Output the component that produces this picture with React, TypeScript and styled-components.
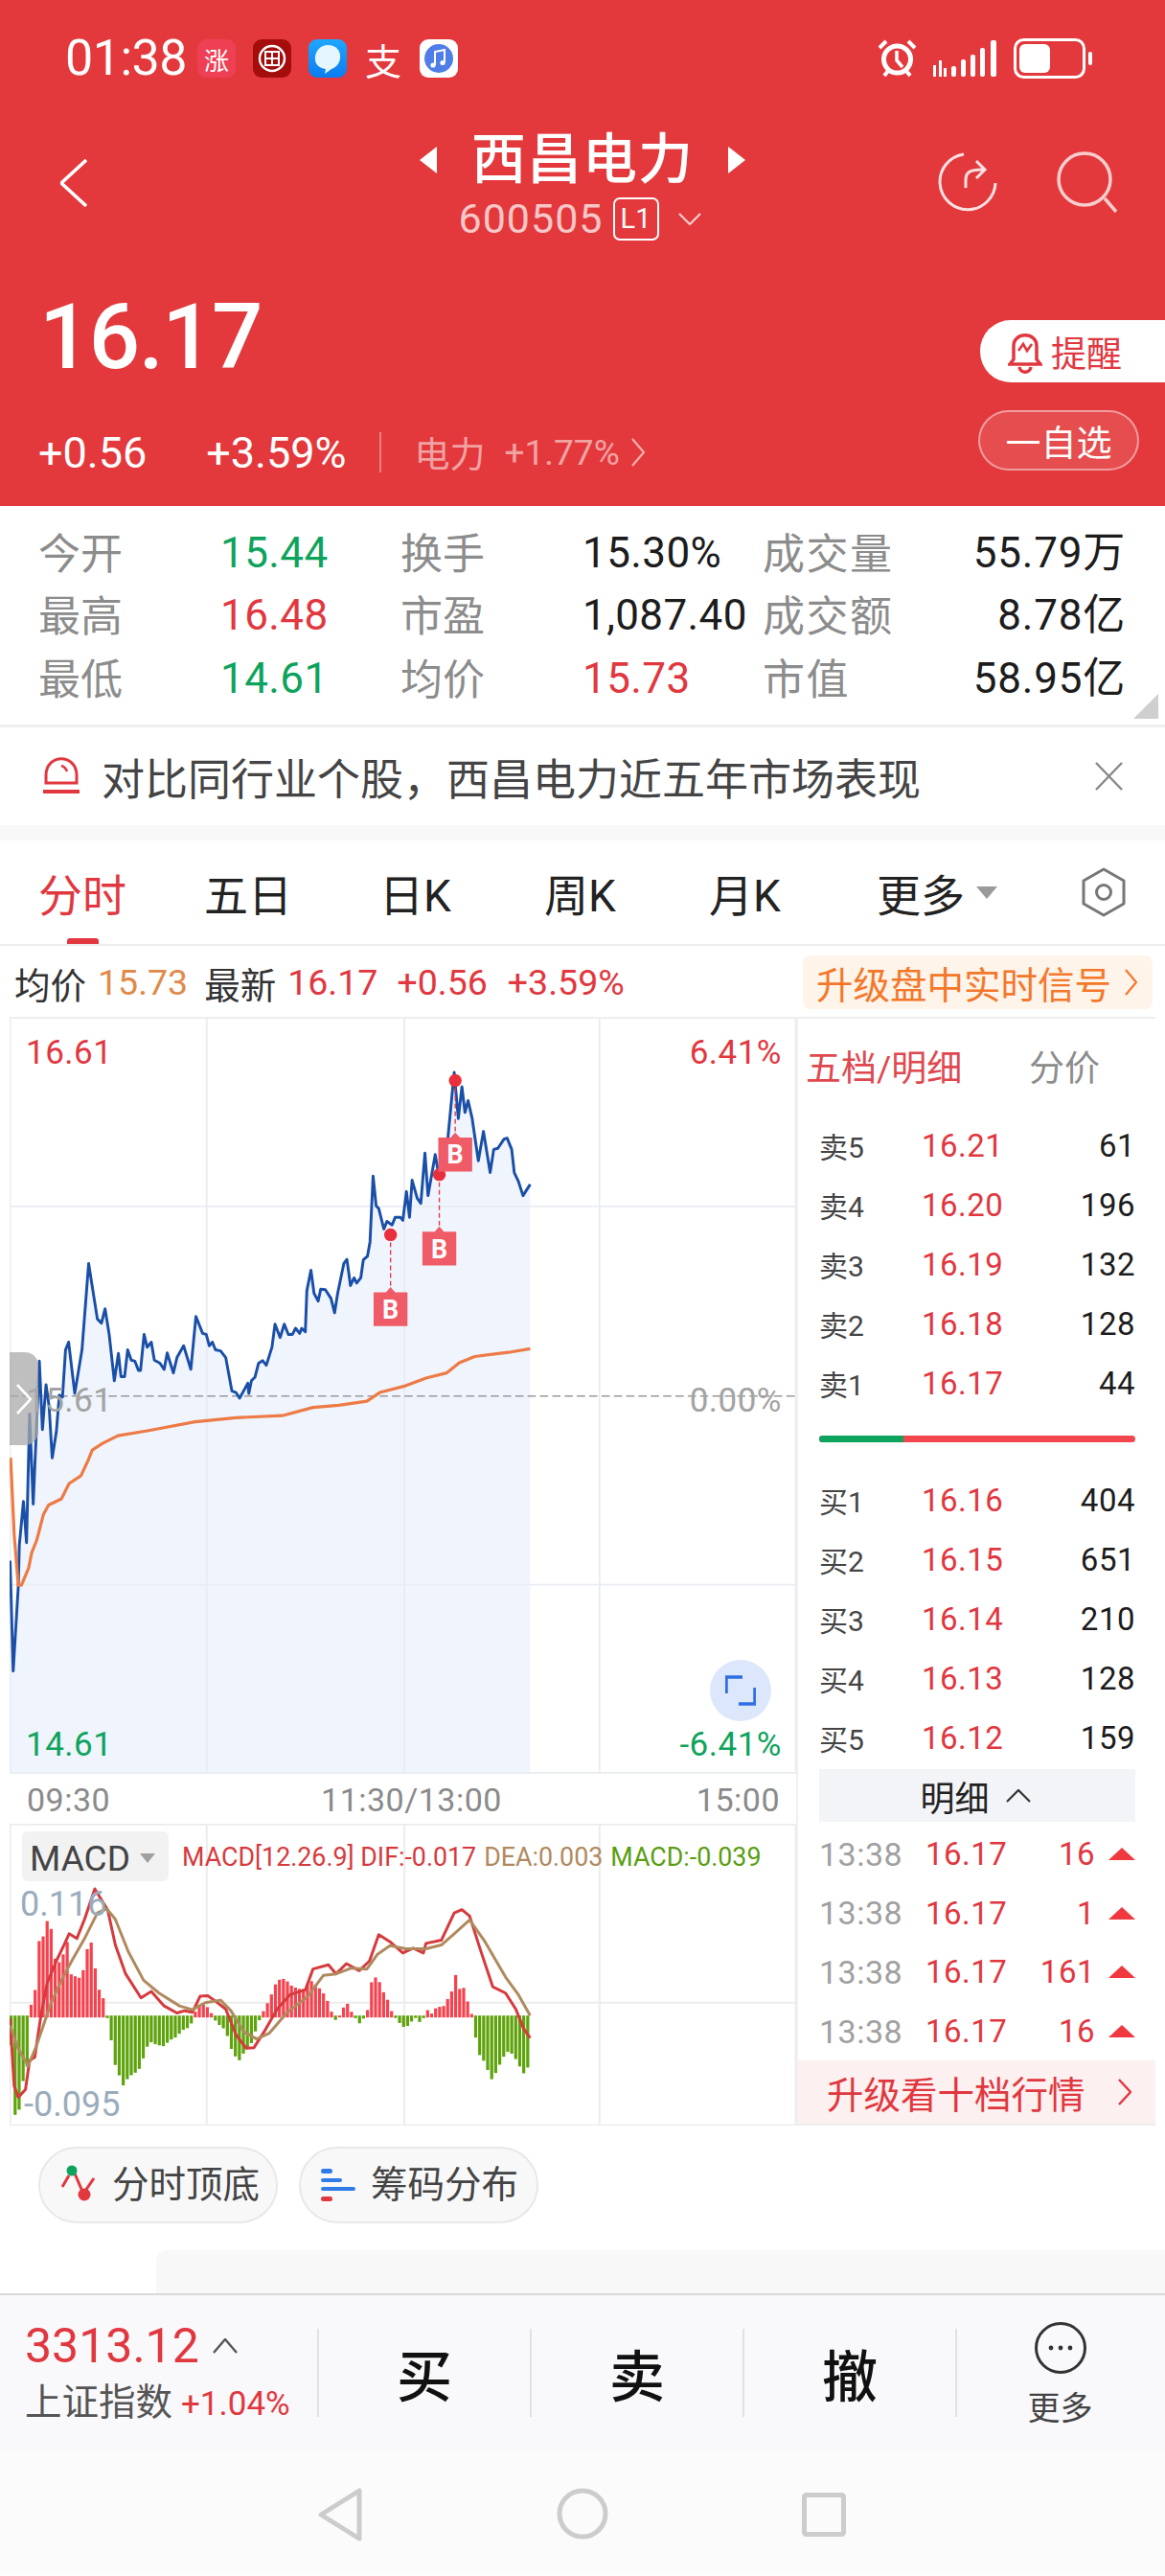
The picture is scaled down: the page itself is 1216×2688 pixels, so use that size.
import React from 'react';
import styled, { createGlobalStyle } from 'styled-components';

const RED = '#e3393c';
const UP = '#e1373f';
const DOWN = '#0ea35c';

const GlobalStyle = createGlobalStyle`
  html, body { margin: 0; padding: 0; background: #fff; }
  * { box-sizing: border-box; }
`;

const toneColor = (tone?: string) =>
  tone === 'up' ? UP : tone === 'down' ? DOWN : tone === 'muted' ? '#8c8c8c' : tone === 'flat' ? '#a3a3a3' : '#1c1c1c';

const Page = styled.div`
  width: 1216px;
  height: 2688px;
  overflow: hidden;
  background: #fff;
  font-family: Roboto, "Noto Sans CJK SC", sans-serif;
  color: #1c1c1c;
`;

/* ---------- header ---------- */
const Header = styled.header`
  height: 528px;
  background: ${RED};
  color: #fff;
  display: flex;
  flex-direction: column;
`;
const StatusBar = styled.div`
  display: flex;
  align-items: center;
  height: 40px;
  margin-top: 41px;
  padding: 0 74px 0 68px;
`;
const Clock = styled.span`
  font-size: 52px;
  line-height: 40px;
  width: 138px;
  letter-spacing: -0.5px;
`;
const AppIcons = styled.div`
  display: flex;
  gap: 18px;
  flex: 1;
`;
const AppIcon = styled.div<{ $bg: string; $size: number }>`
  width: 40px;
  height: 40px;
  border-radius: 9px;
  background: ${p => p.$bg};
  color: #fff;
  font-size: ${p => p.$size}px;
  display: flex;
  align-items: center;
  justify-content: center;
`;
const StatusRight = styled.div`
  display: flex;
  align-items: center;
  gap: 16px;
`;
const NavRow = styled.div`
  display: grid;
  grid-template-columns: 1fr auto 1fr;
  height: 128px;
  margin-top: 51px;
`;
const BackCell = styled.div`
  padding: 34px 0 0 63px;
`;
const TitleCell = styled.div`
  display: flex;
  flex-direction: column;
  align-items: center;
`;
const TitleLine = styled.div`
  display: flex;
  align-items: center;
  gap: 34px;
  height: 70px;
`;
const Title = styled.h1`
  margin: 0;
  font-size: 57px;
  line-height: 70px;
  font-weight: 500;
  letter-spacing: 1px;
`;
const CodeLine = styled.div`
  display: flex;
  align-items: center;
  height: 52px;
  margin-top: 0;
  padding-right: 6px;
  color: rgba(255, 255, 255, 0.72);
  font-size: 43px;
  letter-spacing: 1px;
`;
const LevelTag = styled.span`
  width: 48px;
  height: 45px;
  margin: 0 20px 0 10px;
  border: 2px solid #fff;
  border-radius: 7px;
  color: #fff;
  font-size: 29px;
  letter-spacing: 0;
  display: flex;
  align-items: center;
  justify-content: center;
`;
const ActionCell = styled.div`
  display: flex;
  justify-content: flex-end;
  gap: 61px;
  padding: 26px 49px 0 0;
`;
const PriceRow = styled.div`
  display: flex;
  justify-content: space-between;
  margin-top: 52px;
`;
const PriceBlock = styled.div`
  padding-left: 41px;
`;
const LastPrice = styled.div`
  font-size: 94px;
  line-height: 80px;
  font-weight: 500;
  height: 132px;
  letter-spacing: -1.6px;
`;
const ChangeLine = styled.div`
  display: flex;
  align-items: center;
  height: 56px;
  font-size: 45px;
  margin-left: -1px;
`;
const ChangeText = styled.span`
  margin-right: 62px;
  &:nth-child(2) { margin-right: 34px; }
`;
const Separator = styled.span`
  width: 2px;
  height: 42px;
  background: rgba(255, 255, 255, 0.35);
  margin-right: 35px;
`;
const SectorName = styled.span`
  font-size: 37px;
  color: rgba(255, 255, 255, 0.55);
  margin-right: 20px;
`;
const SectorChange = styled.span`
  font-size: 37px;
  color: rgba(255, 255, 255, 0.55);
  margin-right: 12px;
`;
const SideButtons = styled.div`
  display: flex;
  flex-direction: column;
  align-items: flex-end;
  gap: 29px;
  padding-top: 22px;
`;
const RemindButton = styled.div`
  width: 193px;
  height: 65px;
  background: #fff;
  color: ${UP};
  border-radius: 32px 0 0 32px;
  font-size: 37px;
  display: flex;
  align-items: center;
  gap: 9px;
  padding-left: 29px;
`;
const WatchButton = styled.div`
  width: 168px;
  height: 63px;
  margin-right: 27px;
  border: 2px solid rgba(255, 255, 255, 0.45);
  background: rgba(255, 255, 255, 0.1);
  border-radius: 32px;
  font-size: 37px;
  display: flex;
  align-items: center;
  justify-content: center;
`;

/* ---------- stats ---------- */
const StatsGrid = styled.div`
  position: relative;
  height: 231px;
  padding: 16px 41px 0 40px;
  display: grid;
  grid-template-columns: 190px 188px 190px 188px 160px 1fr;
  grid-auto-rows: 65.5px;
  align-items: center;
  border-bottom: 3px solid #f0f0f0;
`;
const StatLabel = styled.div<{ $wide?: boolean }>`
  font-size: 44px;
  line-height: 60px;
  margin-top: 4px;
  color: #8c8c8c;
  white-space: nowrap;
  letter-spacing: ${p => (p.$wide ? 1.5 : 0)}px;
`;
const StatValue = styled.div<{ $tone?: string; $end?: boolean }>`
  font-size: 44px;
  line-height: 60px;
  color: ${p => toneColor(p.$tone)};
  text-align: ${p => (p.$end ? 'right' : 'left')};
  letter-spacing: ${p => (p.$end ? 0.8 : 0.4)}px;
  white-space: nowrap;
`;
const CornerMark = styled.div`
  position: absolute;
  right: 7px;
  bottom: 6px;
  width: 26px;
  height: 26px;
  background: #cfcfcf;
  clip-path: polygon(100% 0, 100% 100%, 0 100%);
`;

/* ---------- banner + tabs ---------- */
const Banner = styled.div`
  height: 102px;
  display: flex;
  align-items: center;
  padding: 0 44px;
  font-size: 45px;
  color: #444;
`;
const BannerText = styled.span`
  flex: 1;
  margin-left: 22px;
  white-space: nowrap;
`;
const GapBand = styled.div`
  height: 16px;
  background: #f8f8f8;
`;
const Tabs = styled.nav`
  height: 110px;
  display: grid;
  grid-template-columns: 173px 183px 172px 172px 175px 213px 1fr;
  align-items: center;
  padding-left: 40px;
  border-bottom: 2px solid #ececec;
`;
const Tab = styled.div<{ $active?: boolean }>`
  position: relative;
  height: 108px;
  display: flex;
  align-items: center;
  font-size: 46px;
  color: ${p => (p.$active ? UP : '#222')};
  &::after {
    content: '';
    display: ${p => (p.$active ? 'block' : 'none')};
    position: absolute;
    left: 30px;
    bottom: 0;
    width: 33px;
    height: 6px;
    border-radius: 3px 3px 0 0;
    background: ${UP};
  }
`;
const TabCaret = styled.span`
  width: 0;
  height: 0;
  margin-left: 12px;
  border-left: 11px solid transparent;
  border-right: 11px solid transparent;
  border-top: 13px solid #9a9a9a;
`;

const InfoRow = styled.div`
  height: 74px;
  display: flex;
  align-items: center;
  padding: 2px 13px 0 15px;
  font-size: 37.5px;
  white-space: nowrap;
`;
const InfoItem = styled.span<{ $color?: string; $gap?: number }>`
  color: ${p => p.$color || '#333'};
  margin-right: ${p => p.$gap ?? 20}px;
`;
const InfoPromo = styled.div`
  margin-left: auto;
  width: 365px;
  height: 56px;
  background: #fff4ea;
  border-radius: 8px;
  color: #f4772a;
  font-size: 38.5px;
  display: flex;
  align-items: center;
  padding-left: 14px;
  gap: 14px;
`;

/* ---------- charts ---------- */
const Trading = styled.div`
  display: flex;
  padding-left: 10px;
`;
const ChartColumn = styled.div`
  width: 821px;
`;
const MainChart = styled.div`
  position: relative;
  height: 790px;
`;
const ChartSvg = styled.svg`
  display: block;
  width: 100%;
  height: 100%;
`;
const ChartLabel = styled.span<{ $tone: string; $y: number; $x: number; $side: 'left' | 'right' }>`
  position: absolute;
  top: ${p => p.$y}px;
  ${p => p.$side}: ${p => p.$x}px;
  font-size: 35px;
  line-height: 36px;
  letter-spacing: 0.5px;
  color: ${p => toneColor(p.$tone)};
`;
const SideTab = styled.div`
  position: absolute;
  left: 0;
  top: 350px;
  width: 30px;
  height: 97px;
  background: rgba(170, 170, 170, 0.75);
  border-radius: 0 14px 14px 0;
  display: flex;
  align-items: center;
  justify-content: center;
`;
const ExpandButton = styled.div`
  position: absolute;
  right: 26px;
  bottom: 55px;
  width: 64px;
  height: 64px;
  border-radius: 50%;
  background: #dce7fb;
  display: flex;
  align-items: center;
  justify-content: center;
`;
const TimeAxis = styled.div`
  height: 52px;
  display: flex;
  justify-content: space-between;
  align-items: center;
  padding: 2px 17px 0 18px;
  font-size: 34px;
  letter-spacing: 0.5px;
  color: #8a8a8a;
`;
const MidTime = styled.span`
  margin-left: 17px;
`;
const MacdPanel = styled.div`
  position: relative;
  height: 315px;
`;
const MacdHead = styled.div`
  position: absolute;
  left: 13px;
  top: 8px;
  display: flex;
  align-items: center;
`;
const MacdSelect = styled.div`
  width: 153px;
  height: 52px;
  border-radius: 6px;
  background: #f2f2f2;
  color: #444;
  font-size: 37px;
  display: flex;
  align-items: center;
  padding: 4px 0 0 8px;
  gap: 10px;
  margin-right: 14px;
`;
const SelectCaret = styled.span`
  width: 0;
  height: 0;
  border-left: 8px solid transparent;
  border-right: 8px solid transparent;
  border-top: 10px solid #a0a0a0;
`;
const MacdLegend = styled.span<{ $color: string }>`
  color: ${p => p.$color};
  font-size: 26.8px;
  margin-right: 8px;
  white-space: nowrap;
  padding-top: 1px;
`;
const AxisNote = styled.span<{ $y: number; $x: number }>`
  position: absolute;
  left: ${p => p.$x}px;
  top: ${p => p.$y}px;
  font-size: 36px;
  line-height: 36px;
  color: #9aacbb;
`;

/* ---------- order book ---------- */
const BookPanel = styled.aside`
  width: 375px;
  border-top: 2px solid #eee;
  border-left: 2px solid #f0f0f0;
  border-bottom: 2px solid #eee;
  height: 1157px;
`;
const BookHead = styled.div`
  height: 101px;
  display: flex;
  align-items: center;
  padding: 0 0 3px 8px;
  font-size: 37px;
  color: #8c8c8c;
`;
const BookTitle = styled.span`
  color: #e0484f;
  width: 233px;
`;
const BookRow = styled.div`
  height: 62px;
  display: grid;
  grid-template-columns: 107px 1fr auto;
  align-items: center;
  padding: 0 21px 0 22px;
  font-size: 33px;
`;
const BookLabel = styled.span`
  color: #444;
  font-size: 30px;
`;
const BookPrice = styled.span`
  color: ${UP};
  letter-spacing: 0.5px;
`;
const BookQty = styled.span`
  color: #1c1c1c;
  letter-spacing: 0.5px;
`;
const RatioBar = styled.div`
  display: flex;
  height: 7px;
  margin: 24px 21px 29px 22px;
  border-radius: 4px;
  overflow: hidden;
  background: #f2474f;
`;
const RatioFill = styled.div`
  background: #0ea35c;
`;
const DetailBar = styled.div`
  height: 55px;
  margin: 2px 21px 3px 22px;
  background: #f3f4f8;
  font-size: 36px;
  color: #222;
  display: flex;
  align-items: center;
  justify-content: center;
  gap: 17px;
  padding-right: 4px;
`;
const DealRow = styled.div`
  height: 61.6px;
  display: grid;
  grid-template-columns: 111px 100px 1fr 42px;
  align-items: center;
  padding: 0 21px 0 22px;
  font-size: 33px;
`;
const DealTime = styled.span`
  color: #a0a0a0;
  font-size: 34px;
  letter-spacing: 0.5px;
`;
const DealPrice = styled.span`
  color: ${UP};
  letter-spacing: 0.5px;
`;
const DealQty = styled.span`
  color: ${UP};
  text-align: right;
  letter-spacing: 0.5px;
`;
const DealArrow = styled.span`
  justify-self: end;
  width: 0;
  height: 0;
  border-left: 14px solid transparent;
  border-right: 14px solid transparent;
  border-bottom: 13px solid #f0383f;
`;
const BookPromo = styled.div`
  height: 66px;
  background: #fdf0f0;
  color: ${UP};
  font-size: 38.5px;
  display: flex;
  align-items: center;
  justify-content: space-between;
  padding: 0 25px 0 30px;
`;

/* ---------- bottom ---------- */
const PillRow = styled.div`
  display: flex;
  gap: 22px;
  padding: 22px 0 28px 40px;
`;
const Pill = styled.div`
  width: 250px;
  height: 80px;
  border-radius: 40px;
  border: 2px solid #e8e8e8;
  background: #f8f8f8;
  font-size: 38.5px;
  color: #444;
  display: flex;
  align-items: center;
  padding: 0 0 0 20px;
  gap: 11px;
  line-height: 76px;
`;
const PeekCard = styled.div`
  height: 45px;
  margin-left: 163px;
  background: #f8f8f8;
  border-radius: 12px 0 0 0;
`;
const TradeBar = styled.div`
  height: 163px;
  border-top: 2px solid #d9d9d9;
  background: #f9f9fb;
  display: flex;
  align-items: center;
`;
const IndexBlock = styled.div`
  width: 331px;
  padding-left: 26px;
`;
const IndexValue = styled.div`
  display: flex;
  align-items: center;
  gap: 14px;
  color: ${UP};
  font-size: 50px;
  line-height: 60px;
`;
const IndexName = styled.div`
  display: flex;
  align-items: baseline;
  gap: 9px;
  margin-top: 4px;
  font-size: 38.5px;
  line-height: 50px;
  color: #555;
  white-space: nowrap;
`;
const IndexChange = styled.span`
  font-size: 35px;
  color: ${UP};
`;
const TradeAction = styled.div`
  width: 222px;
  height: 92px;
  border-left: 2px solid #e2e2e2;
  display: flex;
  align-items: center;
  justify-content: center;
  font-size: 58px;
  font-weight: 500;
  color: #111;
`;
const MoreCell = styled.div`
  flex: 1;
  height: 92px;
  border-left: 2px solid #e2e2e2;
  position: relative;
  display: flex;
  flex-direction: column;
  align-items: center;
  padding-right: 2px;
`;
const MoreInner = styled.div`
  display: flex;
  flex-direction: column;
  align-items: center;
  margin-top: -8px;
  gap: 14px;
  font-size: 34px;
  line-height: 42px;
  color: #444;
`;
const SystemNav = styled.div`
  height: 131px;
  background: #fbfbfc;
  display: flex;
  align-items: flex-start;
  padding: 40px 0 0 332px;
  gap: 202.5px;
`;
const HomeCircle = styled.svg`
  display: block;
`;
const RecentSquare = styled.svg`
  display: block;
  margin-top: 5px;
`;

/* ---------- small drawings ---------- */
const Chevron = ({ dir, w, h, color, sw = 3 }: { dir: 'l' | 'r' | 'd' | 'u'; w: number; h: number; color: string; sw?: number }) => {
  const d = {
    l: `M${w - 1} 1 L1 ${h / 2} L${w - 1} ${h - 1}`,
    r: `M1 1 L${w - 1} ${h / 2} L1 ${h - 1}`,
    d: `M1 1 L${w / 2} ${h - 1} L${w - 1} 1`,
    u: `M1 ${h - 1} L${w / 2} 1 L${w - 1} ${h - 1}`,
  }[dir];
  return (
    <svg width={w} height={h} viewBox={`0 0 ${w} ${h}`} fill="none">
      <path d={d} stroke={color} strokeWidth={sw} />
    </svg>
  );
};

const Arrowhead = ({ right }: { right?: boolean }) => (
  <svg width="20" height="28" viewBox="0 0 20 28">
    <path d={right ? 'M2 0 L20 14 L2 28 Z' : 'M18 0 L0 14 L18 28 Z'} fill="#fff" />
  </svg>
);

const MessagesIcon = () => (
  <svg width="40" height="40" viewBox="0 0 40 40">
    <defs>
      <linearGradient id="msgBg" x1="0" y1="0" x2="0" y2="1">
        <stop offset="0" stopColor="#1ea7ff" />
        <stop offset="1" stopColor="#0a7cf0" />
      </linearGradient>
    </defs>
    <rect width="40" height="40" rx="9" fill="url(#msgBg)" />
    <path d="M20 6 C29 6 34 12 33 20 C32 27 27 30 24 31 L17 36 L18 31 C10 30 6 25 7 18 C8 11 13 6 20 6 Z" fill="#e6f6ff" />
  </svg>
);

const BankIcon = () => (
  <svg width="40" height="40" viewBox="0 0 40 40">
    <rect width="40" height="40" rx="9" fill="#a50d0d" />
    <circle cx="20" cy="20" r="13" fill="none" stroke="#fff" strokeWidth="2.4" />
    <path d="M13 13 H27 V27 H13 Z M13 20 H27 M20 13 V27" fill="none" stroke="#fff" strokeWidth="2" />
  </svg>
);

const MusicIcon = () => (
  <svg width="40" height="40" viewBox="0 0 40 40">
    <rect width="40" height="40" rx="9" fill="#fff" />
    <circle cx="20" cy="20" r="15" fill="#4f7ee8" />
    <path d="M16 27 V13 L26 11 V24" fill="none" stroke="#fff" strokeWidth="2" />
    <circle cx="14" cy="27" r="2.6" fill="#fff" />
    <circle cx="24" cy="24.5" r="2.6" fill="#fff" />
  </svg>
);

const AlarmIcon = () => (
  <svg width="43" height="42" viewBox="0 0 43 42" fill="none" stroke="#fff">
    <circle cx="21.5" cy="22" r="14" strokeWidth="5" />
    <path d="M21 13 V23 L27 30" strokeWidth="3.5" />
    <path d="M3 10 L10 3 M40 10 L33 3 M8 39 L12 34 M35 39 L31 34" strokeWidth="4" />
  </svg>
);

const SignalIcon = () => (
  <svg width="68" height="40" viewBox="0 0 68 40" fill="#fff">
    <rect x="0" y="27" width="3" height="12" />
    <rect x="6" y="22" width="3" height="17" />
    <rect x="11" y="30" width="3" height="9" />
    <rect x="19" y="28" width="5" height="11" rx="2" />
    <rect x="29" y="21" width="5" height="18" rx="2" />
    <rect x="39" y="16" width="5" height="23" rx="2" />
    <rect x="49" y="9" width="5" height="30" rx="2" />
    <rect x="60" y="1" width="6" height="38" rx="2" />
  </svg>
);

const BatteryIcon = () => (
  <svg width="84" height="42" viewBox="0 0 84 42" fill="none">
    <rect x="1.5" y="1.5" width="72" height="39" rx="9" stroke="#fff" strokeWidth="3" />
    <rect x="6" y="6" width="32" height="30" rx="6" fill="#fff" />
    <rect x="78" y="14" width="4" height="14" rx="2" fill="#fff" />
  </svg>
);

const ShareIcon = () => (
  <svg width="64" height="64" viewBox="0 0 64 64" fill="none" stroke="#fff" strokeOpacity="0.85" strokeWidth="3">
    <path d="M28 3 A29 29 0 1 0 61 33" />
    <path d="M30 38 V30 C30 21 35 19 48 19" />
    <path d="M41 10 L50 19 L41 28" />
  </svg>
);

const SearchIcon = () => (
  <svg width="64" height="64" viewBox="0 0 64 64" fill="none" stroke="#fff" strokeOpacity="0.75" strokeWidth="3.5">
    <circle cx="29" cy="29" r="27" />
    <path d="M50 49 L62 63" />
  </svg>
);

const BellIcon = ({ color }: { color: string }) => (
  <svg width="36" height="50" viewBox="0 0 36 50" fill="none" stroke={color} strokeWidth="3.5">
    <path d="M6 33 V19 C6 4 30 4 30 19 V33 L34 38 H2 Z" />
    <path d="M12 41 C13 48 23 48 24 41" />
    <path d="M11 24 L16 17 L20 24 L25 17" strokeWidth="2.6" />
  </svg>
);

const SirenIcon = () => (
  <svg width="40" height="42" viewBox="0 0 40 42" fill="none" stroke="#e1373f" strokeWidth="3">
    <path d="M4 28 V20 C4 -3 36 -3 36 20 V28 Z" />
    <path d="M20 10 C23 11 25 13 26 16" strokeWidth="2.4" />
    <path d="M1 37 H39" strokeWidth="4" />
  </svg>
);

const CloseIcon = () => (
  <svg width="29" height="30" viewBox="0 0 29 30" fill="none" stroke="#888" strokeWidth="2.4">
    <path d="M1 1 L28 29 M28 1 L1 29" />
  </svg>
);

const HexIcon = () => (
  <svg width="48" height="52" viewBox="0 0 48 52" fill="none" stroke="#777" strokeWidth="3">
    <path d="M24 2 L45 14 V38 L24 50 L3 38 V14 Z" strokeLinejoin="round" />
    <circle cx="24" cy="26" r="7.5" />
  </svg>
);

const ExpandIcon = () => (
  <svg width="32" height="32" viewBox="0 0 32 32" fill="none" stroke="#2f6fe4" strokeWidth="3.5">
    <path d="M1 19 V2 H18" />
    <path d="M31 13 V30 H14" />
  </svg>
);

const TopBottomIcon = () => (
  <svg width="44" height="42" viewBox="0 0 44 42" fill="none">
    <path d="M3 23 L10 11" stroke="#e1373f" strokeWidth="3" />
    <path d="M16 9 L25 30 L36 14" stroke="#e1373f" strokeWidth="3" />
    <circle cx="13" cy="6" r="5.5" fill="#0ea35c" />
    <circle cx="26" cy="31" r="6.5" fill="#e1373f" />
  </svg>
);

const ChipsIcon = () => (
  <svg width="42" height="36" viewBox="0 0 42 36">
    <rect x="1" y="1" width="12" height="5" rx="2.5" fill="#2f7be8" />
    <rect x="1" y="11" width="22" height="4" rx="2" fill="#2f7be8" />
    <rect x="1" y="20" width="36" height="4" rx="2" fill="#2f7be8" />
    <rect x="1" y="30" width="12" height="5" rx="2.5" fill="#e1373f" />
  </svg>
);

const MoreIcon = () => (
  <svg width="56" height="56" viewBox="0 0 56 56" fill="none">
    <circle cx="28" cy="28" r="25.5" stroke="#333" strokeWidth="3" />
    <circle cx="18" cy="28" r="2.4" fill="#333" />
    <circle cx="28" cy="28" r="2.4" fill="#333" />
    <circle cx="38" cy="28" r="2.4" fill="#333" />
  </svg>
);

/* ---------- chart data (points read off the reference) ---------- */
const priceLine: [number, number][] = [[20,1100],[26,1315],[36,1150],[38,1070],[46,985],[52,1065],[58,815],[65,990],[77,712],[83,845],[90,758],[96,800],[102,900],[110,850],[116,778],[122,782],[128,690],[134,675],[146,775],[160,690],[173,522],[190,630],[198,638],[205,610],[213,660],[223,750],[231,697],[236,742],[243,742],[249,690],[256,710],[263,712],[270,730],[274,730],[281,660],[287,685],[295,675],[301,710],[312,716],[320,728],[326,696],[338,735],[345,705],[358,682],[372,728],[382,625],[395,658],[402,660],[408,682],[414,675],[420,690],[430,692],[440,705],[452,770],[460,773],[467,784],[483,755],[485,775],[490,750],[497,743],[504,716],[512,711],[519,720],[530,685],[536,640],[546,666],[554,640],[562,660],[570,660],[576,648],[584,658],[588,648],[595,655],[598,575],[606,535],[612,580],[620,595],[625,572],[634,573],[645,590],[652,618],[658,580],[670,522],[676,514],[683,565],[690,550],[695,560],[703,550],[708,515],[716,508],[721,480],[727,352],[733,410],[738,415],[748,455],[754,440],[764,447],[770,432],[780,432],[785,438],[792,382],[798,432],[803,360],[813,395],[820,405],[828,307],[834,390],[848,310],[855,350],[862,345],[873,275],[885,150],[893,240],[900,178],[906,228],[912,205],[920,240],[932,322],[942,265],[955,345],[962,300],[970,298],[982,280],[988,278],[997,300],[1002,345],[1010,362],[1019,390],[1033,368]];
const avgLine: [number, number][] = [[21,900],[28,1050],[36,1148],[42,1148],[56,1115],[62,1085],[72,1060],[85,1010],[95,992],[120,980],[135,950],[158,935],[172,905],[180,885],[200,872],[230,857],[290,847],[380,830],[460,822],[550,818],[610,802],[660,798],[715,790],[740,773],[790,760],[830,745],[870,735],[895,715],[925,703],[990,695],[1033,688]];
const macdEnvelope: [number, number][] = [[20,640],[26,900],[33,980],[40,900],[47,820],[54,790],[56,640],[58,610],[66,600],[72,515],[78,375],[85,395],[92,345],[100,370],[106,460],[113,470],[120,480],[130,390],[137,510],[150,520],[160,525],[165,470],[172,420],[180,410],[187,510],[195,570],[205,595],[209,640],[218,720],[225,790],[235,830],[242,858],[250,825],[262,815],[275,795],[283,745],[292,715],[305,725],[320,730],[330,712],[345,700],[355,680],[370,670],[378,640],[385,610],[395,600],[405,615],[415,640],[425,660],[440,680],[450,735],[460,765],[468,775],[478,740],[490,720],[505,650],[510,640],[515,620],[525,590],[540,530],[555,525],[570,550],[590,560],[605,530],[620,550],[635,580],[645,625],[650,640],[655,650],[660,645],[668,620],[675,595],[683,625],[692,640],[700,660],[705,645],[715,640],[722,540],[735,515],[745,560],[755,590],[765,635],[770,640],[785,670],[797,665],[805,645],[812,640],[820,660],[826,640],[830,612],[838,640],[850,615],[865,610],[880,565],[887,505],[893,570],[900,535],[910,590],[920,640],[925,690],[935,760],[945,780],[957,835],[967,810],[980,765],[992,742],[1005,770],[1020,815],[1033,785]];
const difLine: [number, number][] = [[20,650],[28,860],[36,895],[50,870],[58,780],[68,770],[80,640],[92,540],[110,470],[125,420],[135,385],[150,400],[165,340],[185,245],[200,285],[210,310],[225,420],[245,510],[275,585],[295,565],[320,610],[345,632],[360,625],[375,630],[390,580],[405,578],[420,595],[440,620],[460,700],[480,742],[495,740],[515,690],[540,620],[565,575],[595,560],[610,495],[640,482],[655,510],[675,478],[700,500],[720,470],[738,388],[760,410],[785,445],[805,430],[825,445],[830,415],[860,405],[885,320],[900,310],[915,330],[935,430],[960,550],[985,570],[1005,620],[1020,680],[1033,710]];
const deaLine: [number, number][] = [[20,670],[35,740],[55,797],[70,740],[85,670],[100,600],[120,530],[140,470],[165,400],[190,320],[208,307],[225,340],[250,440],[280,530],[310,570],[350,610],[375,622],[400,600],[430,592],[450,625],[475,690],[500,713],[525,695],[560,630],[600,580],[630,515],[655,510],[685,492],[715,495],[735,450],[760,422],[790,432],[830,432],[860,420],[885,385],[915,342],[945,410],[985,520],[1010,575],[1033,640]];

const toPath = (pts: [number, number][]) => pts.map(([x, y], i) => `${i ? 'L' : 'M'}${x} ${y}`).join(' ');

const envelopeAt = (x: number) => {
  for (let i = 1; i < macdEnvelope.length; i++) {
    const [x0, y0] = macdEnvelope[i - 1];
    const [x1, y1] = macdEnvelope[i];
    if (x <= x1) return y0 + ((x - x0) / (x1 - x0 || 1)) * (y1 - y0);
  }
  return 640;
};
const macdBars = Array.from({ length: 130 }, (_, i) => 22 + i * 7.8).map(x => ({ x, y: envelopeAt(x) }));

const buyMarks = [
  { x: 761, dot: 466, box: 578 },
  { x: 856, dot: 349, box: 460 },
  { x: 887, dot: 166, box: 277 },
];

const PriceChart = () => (
  <ChartSvg viewBox="19 42 1532 1473" preserveAspectRatio="none">
    <path d={`${toPath(priceLine)} L1033 1515 L20 1515 Z`} fill="#eff4fd" />
    <g stroke="#e9ecf1" strokeWidth="3.5" fill="none">
      <path d="M20 44 H1550 M20 411 H1550 M20 1147 H1550 M20 1513 H1550" />
      <path d="M20 42 V1515 M403 42 V1515 M788 42 V1515 M1168 42 V1515 M1550 42 V1515" />
    </g>
    <path d="M20 780 H1550" stroke="#999" strokeWidth="3" strokeDasharray="16 8" />
    <path d={toPath(priceLine)} fill="none" stroke="#1a4fa8" strokeWidth="5.5" strokeLinejoin="round" />
    <path d={toPath(avgLine)} fill="none" stroke="#ee7a45" strokeWidth="6" strokeLinejoin="round" />
    {buyMarks.map(m => (
      <g key={m.x}>
        <path d={`M${m.x} ${m.dot} V${m.box}`} stroke="#e8333f" strokeWidth="2.5" strokeDasharray="9 6" />
        <circle cx={m.x} cy={m.dot} r="12.5" fill="#ea2f3c" />
        <path d={`M${m.x - 33} ${m.box} H${m.x - 9} L${m.x} ${m.box - 10} L${m.x + 9} ${m.box} H${m.x + 33} V${m.box + 66} H${m.x - 33} Z`} fill="#ef5b67" />
        <text x={m.x} y={m.box + 51} textAnchor="middle" fill="#fff" fontSize="50" fontWeight="700" fontFamily="Roboto, sans-serif">B</text>
      </g>
    ))}
  </ChartSvg>
);

const MacdChart = () => (
  <ChartSvg viewBox="19 42 1532 941" preserveAspectRatio="none">
    <g stroke="#ececec" strokeWidth="2" fill="none">
      <path d="M20 44 H1550 M20 600 H1550 M20 982 H1550" vectorEffect="non-scaling-stroke" />
      <path d="M20 42 V983 M403 42 V983 M788 42 V983 M1168 42 V983 M1550 42 V983" vectorEffect="non-scaling-stroke" />
    </g>
    {macdBars.map(b => (
      <rect
        key={b.x}
        x={b.x - 3}
        width="6"
        y={Math.min(b.y, 640)}
        height={Math.abs(b.y - 640) + 6}
        fill={b.y < 640 ? '#f4434f' : '#5ea30c'}
      />
    ))}
    <path d={toPath(difLine)} fill="none" stroke="#d63a3d" strokeWidth="3" vectorEffect="non-scaling-stroke" strokeLinejoin="round" />
    <path d={toPath(deaLine)} fill="none" stroke="#b08a5e" strokeWidth="3" vectorEffect="non-scaling-stroke" strokeLinejoin="round" />
  </ChartSvg>
);

const stats = [
  ['今开', '15.44', 'down', '换手', '15.30%', '', '成交量', '55.79万'],
  ['最高', '16.48', 'up', '市盈', '1,087.40', '', '成交额', '8.78亿'],
  ['最低', '14.61', 'down', '均价', '15.73', 'up', '市值', '58.95亿'],
];
const asks = [['卖5', '16.21', '61'], ['卖4', '16.20', '196'], ['卖3', '16.19', '132'], ['卖2', '16.18', '128'], ['卖1', '16.17', '44']];
const bids = [['买1', '16.16', '404'], ['买2', '16.15', '651'], ['买3', '16.14', '210'], ['买4', '16.13', '128'], ['买5', '16.12', '159']];
const deals = ['16', '1', '161', '16'];

export default function App() {
  return (
    <Page>
      <GlobalStyle />
      <Header>
        <StatusBar>
          <Clock>01:38</Clock>
          <AppIcons>
            <AppIcon $bg="#ee3f55" $size={26}>涨</AppIcon>
            <BankIcon />
            <MessagesIcon />
            <AppIcon $bg="transparent" $size={38}>支</AppIcon>
            <MusicIcon />
          </AppIcons>
          <StatusRight>
            <AlarmIcon />
            <SignalIcon />
            <BatteryIcon />
          </StatusRight>
        </StatusBar>
        <NavRow>
          <BackCell>
            <Chevron dir="l" w={28} h={50} color="#fff" sw={3.5} />
          </BackCell>
          <TitleCell>
            <TitleLine>
              <Arrowhead />
              <Title>西昌电力</Title>
              <Arrowhead right />
            </TitleLine>
            <CodeLine>
              600505
              <LevelTag>L1</LevelTag>
              <Chevron dir="d" w={24} h={13} color="rgba(255,255,255,0.75)" sw={2.2} />
            </CodeLine>
          </TitleCell>
          <ActionCell>
            <ShareIcon />
            <SearchIcon />
          </ActionCell>
        </NavRow>
        <PriceRow>
          <PriceBlock>
            <LastPrice>16.17</LastPrice>
            <ChangeLine>
              <ChangeText>+0.56</ChangeText>
              <ChangeText>+3.59%</ChangeText>
              <Separator />
              <SectorName>电力</SectorName>
              <SectorChange>+1.77%</SectorChange>
              <Chevron dir="r" w={14} h={30} color="rgba(255,255,255,0.6)" sw={2.2} />
            </ChangeLine>
          </PriceBlock>
          <SideButtons>
            <RemindButton>
              <BellIcon color={UP} />
              提醒
            </RemindButton>
            <WatchButton>一自选</WatchButton>
          </SideButtons>
        </PriceRow>
      </Header>

      <StatsGrid>
        {stats.map(r => (
          <React.Fragment key={r[0]}>
            <StatLabel>{r[0]}</StatLabel>
            <StatValue $tone={r[2]}>{r[1]}</StatValue>
            <StatLabel>{r[3]}</StatLabel>
            <StatValue $tone={r[5]}>{r[4]}</StatValue>
            <StatLabel $wide>{r[6]}</StatLabel>
            <StatValue $end>{r[7]}</StatValue>
          </React.Fragment>
        ))}
        <CornerMark />
      </StatsGrid>

      <Banner>
        <SirenIcon />
        <BannerText>对比同行业个股，西昌电力近五年市场表现</BannerText>
        <CloseIcon />
      </Banner>
      <GapBand />

      <Tabs>
        <Tab $active>分时</Tab>
        <Tab>五日</Tab>
        <Tab>日K</Tab>
        <Tab>周K</Tab>
        <Tab>月K</Tab>
        <Tab>更多<TabCaret /></Tab>
        <HexIcon />
      </Tabs>

      <InfoRow>
        <InfoItem $gap={12}>均价</InfoItem>
        <InfoItem $color="#e08a4a" $gap={17}>15.73</InfoItem>
        <InfoItem $gap={12}>最新</InfoItem>
        <InfoItem $color={UP}>16.17</InfoItem>
        <InfoItem $color={UP} $gap={21}>+0.56</InfoItem>
        <InfoItem $color={UP}>+3.59%</InfoItem>
        <InfoPromo>
          升级盘中实时信号
          <Chevron dir="r" w={13} h={28} color="#f4772a" sw={2.2} />
        </InfoPromo>
      </InfoRow>

      <Trading>
        <ChartColumn>
          <MainChart>
            <PriceChart />
            <ChartLabel $tone="up" $side="left" $x={17} $y={20}>16.61</ChartLabel>
            <ChartLabel $tone="up" $side="right" $x={15} $y={20}>6.41%</ChartLabel>
            <ChartLabel $tone="flat" $side="left" $x={17} $y={383}>15.61</ChartLabel>
            <ChartLabel $tone="flat" $side="right" $x={15} $y={383}>0.00%</ChartLabel>
            <ChartLabel $tone="down" $side="left" $x={17} $y={742}>14.61</ChartLabel>
            <ChartLabel $tone="down" $side="right" $x={15} $y={742}>-6.41%</ChartLabel>
            <SideTab>
              <Chevron dir="r" w={16} h={32} color="#fff" sw={2.6} />
            </SideTab>
            <ExpandButton>
              <ExpandIcon />
            </ExpandButton>
          </MainChart>
          <TimeAxis>
            <span>09:30</span>
            <MidTime>11:30/13:00</MidTime>
            <span>15:00</span>
          </TimeAxis>
          <MacdPanel>
            <MacdChart />
            <MacdHead>
              <MacdSelect>MACD<SelectCaret /></MacdSelect>
              <MacdLegend $color="#d63a3d">MACD[12.26.9] DIF:-0.017</MacdLegend>
              <MacdLegend $color="#b08a5e">DEA:0.003</MacdLegend>
              <MacdLegend $color="#5a9e10">MACD:-0.039</MacdLegend>
            </MacdHead>
            <AxisNote $x={11} $y={66}>0.116</AxisNote>
            <AxisNote $x={15} $y={275}>-0.095</AxisNote>
          </MacdPanel>
        </ChartColumn>

        <BookPanel>
          <BookHead>
            <BookTitle>五档/明细</BookTitle>
            分价
          </BookHead>
          {asks.map(r => (
            <BookRow key={r[0]}>
              <BookLabel>{r[0]}</BookLabel>
              <BookPrice>{r[1]}</BookPrice>
              <BookQty>{r[2]}</BookQty>
            </BookRow>
          ))}
          <RatioBar>
            <RatioFill style={{ width: `${(87 / 328) * 100}%` }} />
          </RatioBar>
          {bids.map(r => (
            <BookRow key={r[0]}>
              <BookLabel>{r[0]}</BookLabel>
              <BookPrice>{r[1]}</BookPrice>
              <BookQty>{r[2]}</BookQty>
            </BookRow>
          ))}
          <DetailBar>
            明细
            <Chevron dir="u" w={26} h={14} color="#333" sw={2.2} />
          </DetailBar>
          {deals.map((q, i) => (
            <DealRow key={i}>
              <DealTime>13:38</DealTime>
              <DealPrice>16.17</DealPrice>
              <DealQty>{q}</DealQty>
              <DealArrow />
            </DealRow>
          ))}
          <BookPromo>
            升级看十档行情
            <Chevron dir="r" w={14} h={28} color={UP} sw={2.4} />
          </BookPromo>
        </BookPanel>
      </Trading>

      <PillRow>
        <Pill><TopBottomIcon />分时顶底</Pill>
        <Pill><ChipsIcon />筹码分布</Pill>
      </PillRow>
      <PeekCard />

      <TradeBar>
        <IndexBlock>
          <IndexValue>
            3313.12
            <Chevron dir="u" w={26} h={16} color="#555" sw={2.4} />
          </IndexValue>
          <IndexName>
            上证指数
            <IndexChange>+1.04%</IndexChange>
          </IndexName>
        </IndexBlock>
        <TradeAction>买</TradeAction>
        <TradeAction>卖</TradeAction>
        <TradeAction>撤</TradeAction>
        <MoreCell>
          <MoreInner>
            <MoreIcon />
            更多
          </MoreInner>
        </MoreCell>
      </TradeBar>

      <SystemNav>
        <svg width="46" height="56" viewBox="0 0 46 56" fill="none" stroke="#cccccc" strokeWidth="5" strokeLinejoin="round">
          <path d="M43 3 V53 L3 28 Z" />
        </svg>
        <HomeCircle width="54" height="54" viewBox="0 0 54 54" fill="none" stroke="#cccccc" strokeWidth="5">
          <circle cx="27" cy="27" r="24" />
        </HomeCircle>
        <RecentSquare width="46" height="46" viewBox="0 0 46 46" fill="none" stroke="#cccccc" strokeWidth="5">
          <rect x="2.5" y="2.5" width="41" height="41" rx="2" />
        </RecentSquare>
      </SystemNav>
    </Page>
  );
}
